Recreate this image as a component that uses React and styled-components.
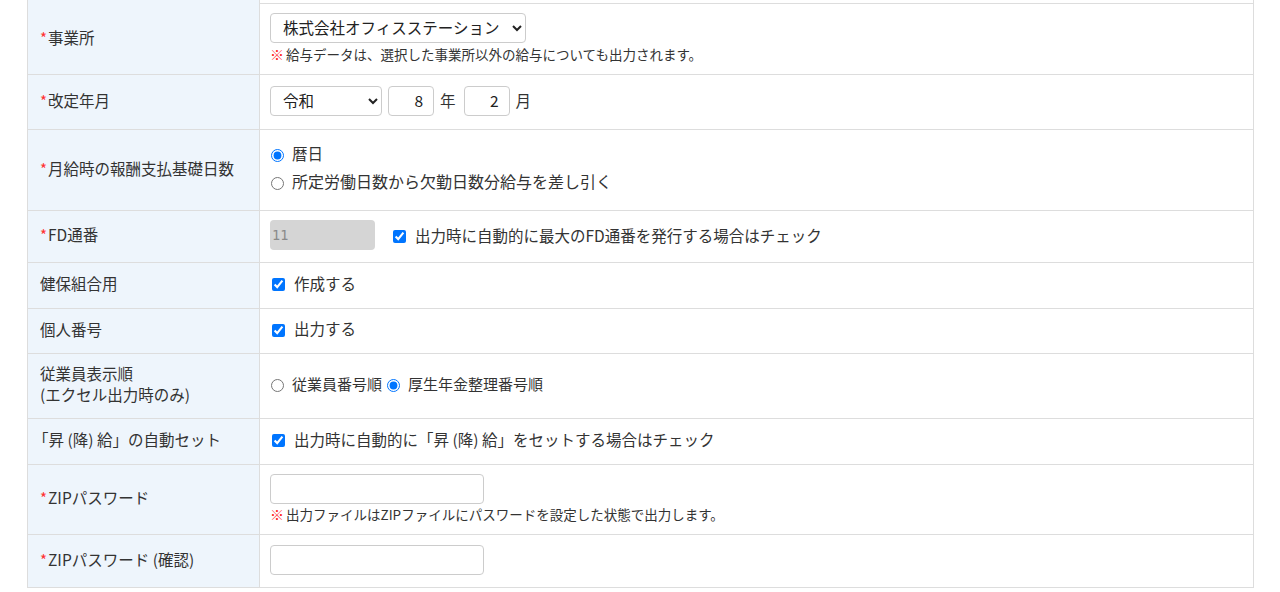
import React from 'react';
import styled, { createGlobalStyle } from 'styled-components';

const GlobalStyle = createGlobalStyle`
  html, body {
    margin: 0;
    padding: 0;
    background: #ffffff;
  }
  body {
    font-family: "Noto Sans CJK JP", "Noto Sans", sans-serif;
    color: #333333;
    font-size: 15px;
  }
  * {
    box-sizing: border-box;
  }
`;

const Page = styled.div`
  padding: 0 27px;
  width: 1280px;
`;

const FormTable = styled.div`
  width: 1227px;
  border-left: 1px solid #dddddd;
  border-right: 1px solid #dddddd;
`;

const Row = styled.div`
  display: grid;
  grid-template-columns: 232px 1fr;
  height: ${(props) => props.h}px;
  border-bottom: 1px solid #dddddd;
`;

const Label = styled.div`
  background: #eef5fc;
  border-right: 1px solid #dddddd;
  display: flex;
  flex-direction: column;
  justify-content: center;
  padding: 0 0 4px ${(props) => (props.bracket ? 5 : 12)}px;
  font-size: 15.5px;
  line-height: 21px;
`;

const Required = styled.span`
  color: #ff3030;
  font-size: 15px;
  margin-right: 1px;
`;

const Cell = styled.div`
  display: flex;
  flex-direction: column;
  justify-content: center;
  padding: 0 10px ${(props) => (props.pb === undefined ? 2 : props.pb)}px;
`;

const Line = styled.div`
  display: flex;
  align-items: center;
  gap: ${(props) => props.gap || 0}px;
  height: ${(props) => props.h || 'auto'};
`;

const Select = styled.select`
  height: 30px;
  width: ${(props) => props.w}px;
  border: 1px solid #cccccc;
  border-radius: 4px;
  background: #ffffff;
  font-family: inherit;
  font-size: 15.5px;
  color: #222222;
  padding: 0 4px 2px 8px;
`;

const TextBox = styled.input`
  height: 30px;
  width: ${(props) => props.w}px;
  border: 1px solid #cccccc;
  border-radius: 4px;
  background: #ffffff;
  font-family: inherit;
  font-size: 15.5px;
  color: #222222;
  text-align: ${(props) => (props.right ? 'right' : 'left')};
  padding: 0 10px 2px;
  outline: none;
`;

const DisabledBox = styled.input`
  height: 30px;
  width: 105px;
  border: none;
  border-radius: 4px;
  background: #d5d5d5;
  color: #8a8a8a;
  font-family: "DejaVu Sans Mono", monospace;
  font-size: 13.5px;
  padding: 0 2px;
`;

const Unit = styled.span`
  font-size: 15.5px;
  margin: 0 ${(props) => props.right || 0}px 3px 0;
`;

const Note = styled.div`
  font-size: 13.5px;
  line-height: 18px;
  margin-top: ${(props) => props.top || 3}px;
  color: #333333;
`;

const Mark = styled.span`
  color: #ff1a1a;
  font-weight: bold;
  font-size: 14px;
  margin-right: 2px;
`;

const Check = styled.label`
  display: inline-flex;
  align-items: center;
  font-size: 15.5px;
  margin-left: ${(props) => props.left || 0}px;
  margin-right: ${(props) => props.right || 0}px;

  input {
    margin: 0 9px 0 2px;
    width: 13px;
    height: 13px;
    position: relative;
    top: 2px;
  }
`;

const Radio = styled.label`
  display: inline-flex;
  align-items: center;
  font-size: ${(props) => props.size || 15.5}px;
  margin-right: ${(props) => props.right || 0}px;

  input {
    margin: 0 8px 0 1px;
    width: 13px;
    height: 13px;
    position: relative;
    top: 2px;
  }
`;

const rows = [71, 55, 81, 52, 46, 45, 65, 46, 70, 53];

export default function App() {
  return (
    <Page>
      <GlobalStyle />
      <FormTable>
        <Row h={4}>
          <Label />
          <Cell />
        </Row>
        <Row h={rows[0]}>
          <Label><div><Required>*</Required>事業所</div></Label>
          <Cell>
            <Line>
              <Select w={256} defaultValue="os">
                <option value="os">株式会社オフィスステーション</option>
              </Select>
            </Line>
            <Note top={2}><Mark>※</Mark>給与データは、選択した事業所以外の給与についても出力されます。</Note>
          </Cell>
        </Row>
        <Row h={rows[1]}>
          <Label><div><Required>*</Required>改定年月</div></Label>
          <Cell>
            <Line gap={6}>
              <Select w={112} defaultValue="r">
                <option value="r">令和</option>
              </Select>
              <TextBox w={46} right defaultValue="8" />
              <Unit right={2}>年</Unit>
              <TextBox w={46} right defaultValue="2" />
              <Unit>月</Unit>
            </Line>
          </Cell>
        </Row>
        <Row h={rows[2]}>
          <Label><div><Required>*</Required>月給時の報酬支払基礎日数</div></Label>
          <Cell pb={6}>
            <Line h="28px">
              <Radio><input type="radio" name="base" defaultChecked />暦日</Radio>
            </Line>
            <Line h="28px">
              <Radio size={16}><input type="radio" name="base" />所定労働日数から欠勤日数分給与を差し引く</Radio>
            </Line>
          </Cell>
        </Row>
        <Row h={rows[3]}>
          <Label><div><Required>*</Required>FD通番</div></Label>
          <Cell pb={4}>
            <Line>
              <DisabledBox disabled defaultValue="11" />
              <Check left={16}>
                <input type="checkbox" defaultChecked />
                出力時に自動的に最大のFD通番を発行する場合はチェック
              </Check>
            </Line>
          </Cell>
        </Row>
        <Row h={rows[4]}>
          <Label><div>健保組合用</div></Label>
          <Cell pb={6}>
            <Line>
              <Check><input type="checkbox" defaultChecked />作成する</Check>
            </Line>
          </Cell>
        </Row>
        <Row h={rows[5]}>
          <Label><div>個人番号</div></Label>
          <Cell pb={6}>
            <Line>
              <Check><input type="checkbox" defaultChecked />出力する</Check>
            </Line>
          </Cell>
        </Row>
        <Row h={rows[6]}>
          <Label>
            <div>従業員表示順</div>
            <div>(エクセル出力時のみ)</div>
          </Label>
          <Cell pb={6}>
            <Line>
              <Radio size={15} right={4}><input type="radio" name="order" />従業員番号順</Radio>
              <Radio size={15}><input type="radio" name="order" defaultChecked />厚生年金整理番号順</Radio>
            </Line>
          </Cell>
        </Row>
        <Row h={rows[7]}>
          <Label bracket><div>「昇 (降) 給」の自動セット</div></Label>
          <Cell pb={6}>
            <Line>
              <Check><input type="checkbox" defaultChecked />出力時に自動的に「昇 (降) 給」をセットする場合はチェック</Check>
            </Line>
          </Cell>
        </Row>
        <Row h={rows[8]}>
          <Label><div><Required>*</Required>ZIPパスワード</div></Label>
          <Cell>
            <Line>
              <TextBox w={214} type="password" />
            </Line>
            <Note top={1}><Mark>※</Mark>出力ファイルはZIPファイルにパスワードを設定した状態で出力します。</Note>
          </Cell>
        </Row>
        <Row h={rows[9]}>
          <Label><div><Required>*</Required>ZIPパスワード (確認)</div></Label>
          <Cell>
            <Line>
              <TextBox w={214} type="password" />
            </Line>
          </Cell>
        </Row>
      </FormTable>
    </Page>
  );
}
